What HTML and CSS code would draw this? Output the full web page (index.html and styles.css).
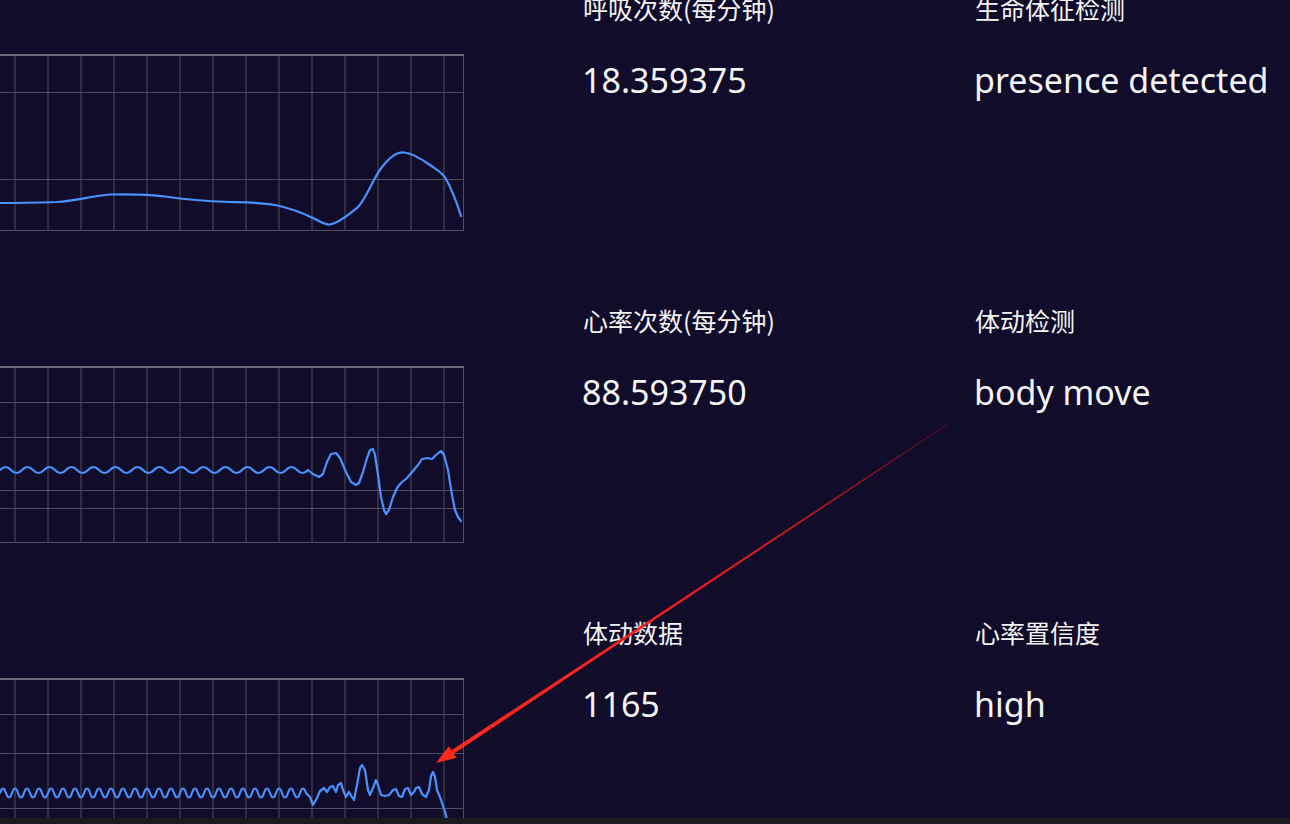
FILE: index.html
```html
<!DOCTYPE html>
<html lang="zh-CN">
<head>
  <meta charset="UTF-8" />
  <title>雷达生命体征监测</title>
  <meta name="viewport" content="width=device-width, initial-scale=1.0" />
  <link rel="stylesheet" href="styles.css">
</head>
<body>
  <div class="page">

    <!-- 呼吸 -->
    <div class="row">
      <div class="chart">
        <svg width="464" height="177" viewBox="0 54 464 177">
          <g class="grid">
            <path d="M15 54V231M48 54V231M81 54V231M114 54V231M147 54V231M180 54V231M213 54V231M246 54V231M279 54V231M312 54V231M345 54V231M378 54V231M411 54V231M444 54V231M463.5 54V231" />
            <path d="M0 92.5H464M0 179.5H464M0 230.5H464" />
          </g>
          <path class="axis" d="M0 55H464" />
          <path class="wave" d="M0 203 C20 203 40 202.5 57 202 C75 201 92 196 110 194.5 C130 194 150 194.5 165 196.5 C185 199.5 200 201 230 202 C250 202.5 262 202.5 275 205 C290 208 303 213 315 219 C322 223 326 225 330 224.5 C340 223 350 213 357 208 C366 200 372 180 382 167 C390 157 396 152 404 152.5 C412 153 420 158 430 165 C437 170 442 172 446 179 C452 190 457 203 461 216" />
        </svg>
      </div>
      <div class="info">
        <div class="item">
          <div class="label">呼吸次数(每分钟)</div>
          <div class="value">18.359375</div>
        </div>
        <div class="item">
          <div class="label">生命体征检测</div>
          <div class="value">presence detected</div>
        </div>
      </div>
    </div>

    <!-- 心率 -->
    <div class="row">
      <div class="chart">
        <svg width="464" height="177" viewBox="0 366 464 177">
          <g class="grid">
            <path d="M15 366V543M48 366V543M81 366V543M114 366V543M147 366V543M180 366V543M213 366V543M246 366V543M279 366V543M312 366V543M345 366V543M378 366V543M411 366V543M444 366V543M463.5 366V543" />
            <path d="M0 402.5H464M0 437.5H464M0 490.5H464M0 508.5H464M0 542.5H464" />
          </g>
          <path class="axis" d="M0 367H464" />
          <path class="wave" d="M0 470 Q5.5 464 11 470 T22 470 T33 470 T44 470 T55 470 T66 470 T77 470 T88 470 T99 470 T110 470 T121 470 T132 470 T143 470 T154 470 T165 470 T176 470 T187 470 T198 470 T209 470 T220 470 T231 470 T242 470 T253 470 T264 470 T275 470 T286 470 T297 470 T308 470
            L313 474 L319 477 L323 474 L327 462 L331 454 L336 453 L340 458 L346 472 L351 482 L356 485 L359 483 L363 472 L367 458 L370 450 L373 449 L375 455 L378 475 L381 497 L384 510 L386 514 L389 510 L393 497 L397 488 L401 483 L407 478 L413 471 L418 465 L422 459 L427 458 L432 459 L436 455 L441 451 L444 455 L448 470 L452 495 L455 510 L458 517 L461 521" />
        </svg>
      </div>
      <div class="info">
        <div class="item">
          <div class="label">心率次数(每分钟)</div>
          <div class="value">88.593750</div>
        </div>
        <div class="item">
          <div class="label">体动检测</div>
          <div class="value">body move</div>
        </div>
      </div>
    </div>

    <!-- 体动 -->
    <div class="row">
      <div class="chart">
        <svg width="464" height="177" viewBox="0 678 464 177">
          <g class="grid">
            <path d="M15 678V855M48 678V855M81 678V855M114 678V855M147 678V855M180 678V855M213 678V855M246 678V855M279 678V855M312 678V855M345 678V855M378 678V855M411 678V855M444 678V855M463.5 678V855" />
            <path d="M0 714.5H464M0 753.5H464M0 808.5H464" />
          </g>
          <path class="axis" d="M0 679H464" />
          <path class="wave" d="M0 793 Q3 784 6 793 T12 793 T18 793 T24 793 T30 793 T36 793 T42 793 T48 793 T54 793 T60 793 T66 793 T72 793 T78 793 T84 793 T90 793 T96 793 T102 793 T108 793 T114 793 T120 793 T126 793 T132 793 T138 793 T144 793 T150 793 T156 793 T162 793 T168 793 T174 793 T180 793 T186 793 T192 793 T198 793 T204 793 T210 793 T216 793 T222 793 T228 793 T234 793 T240 793 T246 793 T252 793 T258 793 T264 793 T270 793 T276 793 T282 793 T288 793 T294 793 T300 793 T306 793
            L310 797 L313 805 L316 800 L320 791 L324 788 L327 792 L330 787 L333 786 L336 792 L338 785 L341 783 L343 790 L346 797 L349 792 L352 797 L354 800 L357 785 L360 768 L362 765 L365 770 L368 790 L370 795 L373 788 L376 780 L378 785 L381 795 L385 796 L389 795 L393 790 L396 789 L399 796 L402 797 L405 789 L408 788 L411 795 L414 792 L416 788 L419 787 L422 794 L426 797 L429 790 L431 776 L433 772 L435 777 L437 790 L440 797 L443 806 L446 815 L449 830" />
        </svg>
      </div>
      <div class="info">
        <div class="item">
          <div class="label">体动数据</div>
          <div class="value">1165</div>
        </div>
        <div class="item">
          <div class="label">心率置信度</div>
          <div class="value">high</div>
        </div>
      </div>
    </div>

  </div>

  <!-- 标注箭头 -->
  <svg class="arrow" width="1290" height="824" viewBox="0 0 1290 824">
    <defs>
      <linearGradient id="arrowFade" x1="948" y1="424" x2="436" y2="763" gradientUnits="userSpaceOnUse">
        <stop offset="0" stop-color="#6e0c22" />
        <stop offset="0.35" stop-color="#e01a1a" />
        <stop offset="1" stop-color="#ff2a1f" />
      </linearGradient>
    </defs>
    <polygon fill="url(#arrowFade)" points="947.8,423.7 451.6,750.3 448.8,746.2 436,763 456.6,757.8 453.8,753.7 948.2,424.3" />
  </svg>

  <div class="bottom-bar"></div>
</body>
</html>
```

FILE: styles.css
```css
* { margin: 0; padding: 0; box-sizing: border-box; }

body {
  background: #100c2a;
  color: #f4f4f4;
  font-family: "Noto Sans", "Noto Sans CJK SC", sans-serif;
  width: 1290px;
  height: 824px;
  overflow: hidden;
  position: relative;
}

/* the page is scrolled a little, so the first labels sit cut at the top */
.page {
  margin-top: -22px;
}

.row {
  display: flex;
  height: 312px;
}

.chart {
  width: 464px;
  padding-top: 76px;
}

.chart svg {
  display: block;
  overflow: visible;
}

.grid path {
  fill: none;
  stroke: #504e5d;
  stroke-width: 1;
}

.axis {
  fill: none;
  stroke: #6b6979;
  stroke-width: 2;
}

.wave {
  fill: none;
  stroke: #4992ff;
  stroke-width: 2.2;
  stroke-linejoin: round;
  stroke-linecap: round;
}

.info {
  display: flex;
  padding-left: 119px;
  padding-top: 15px;
}

.item {
  width: 392px;
}

.label {
  font-family: "Noto Sans CJK SC", sans-serif;
  font-size: 25px;
  line-height: 30px;
}

.value {
  font-size: 34px;
  line-height: 40px;
  margin-top: 37px;
  margin-left: -1px;
}

.arrow {
  position: absolute;
  left: 0;
  top: 0;
  pointer-events: none;
}

.bottom-bar {
  position: absolute;
  left: 0;
  bottom: 0;
  width: 100%;
  height: 6px;
  background: #1b1b1f;
}
```
